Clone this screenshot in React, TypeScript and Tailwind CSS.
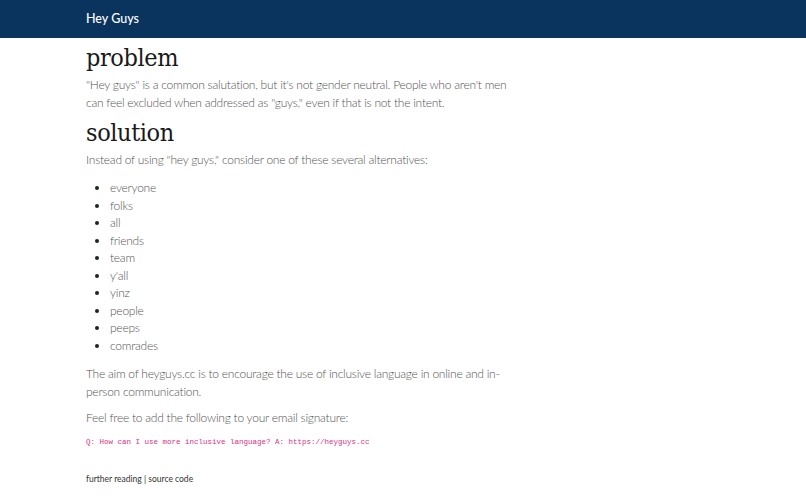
import React from "react";

const items = ["everyone", "folks", "all", "friends", "team", "y'all", "yinz", "people", "peeps", "comrades"];

const headFont = { fontFamily: "'DejaVu Serif Condensed', 'DejaVu Serif', serif" };

export default function App() {
  return (
    <div className="min-h-[502px] bg-white" style={{ fontFamily: "Lato, 'Open Sans', sans-serif" }}>
      <nav className="h-[38px] bg-[#0a345e] flex items-center pl-[86px]">
        <span className="text-white text-[12.5px] font-medium">Hey Guys</span>
      </nav>
      <main className="pl-[86px] w-[510px] text-[#555] font-light text-[12px] leading-[18px] tracking-[-0.25px]">
        <h1 className="text-[#1a1a1a] text-[25px] leading-[34px] mt-[3px] font-normal tracking-[-0.4px]" style={headFont}>problem</h1>
        <p className="mt-[1px]">"Hey guys" is a common salutation, but it's not gender neutral. People who aren't men can feel excluded when addressed as "guys," even if that is not the intent.</p>
        <h1 className="text-[#1a1a1a] text-[25px] leading-[34px] mt-[4px] font-normal tracking-[-0.4px]" style={headFont}>solution</h1>
        <p className="mt-[1px]">Instead of using "hey guys," consider one of these several alternatives:</p>
        <ul className="list-disc pl-[24px] mt-[10px] leading-[17.5px] marker:text-[#222]">
          {items.map((i) => (
            <li key={i}>{i}</li>
          ))}
        </ul>
        <p className="mt-[11px]">The aim of heyguys.cc is to encourage the use of inclusive language in online and in-person communication.</p>
        <p className="mt-[8px]">Feel free to add the following to your email signature:</p>
        <code className="block mt-[6px] text-[#d63384] text-[7.5px] tracking-normal" style={{ fontFamily: "'Liberation Mono', monospace" }}>Q: How can I use more inclusive language? A: https://heyguys.cc</code>
        <footer className="mt-[19px] text-[#333] text-[8.5px] font-normal tracking-normal">further reading | source code</footer>
      </main>
    </div>
  );
}
